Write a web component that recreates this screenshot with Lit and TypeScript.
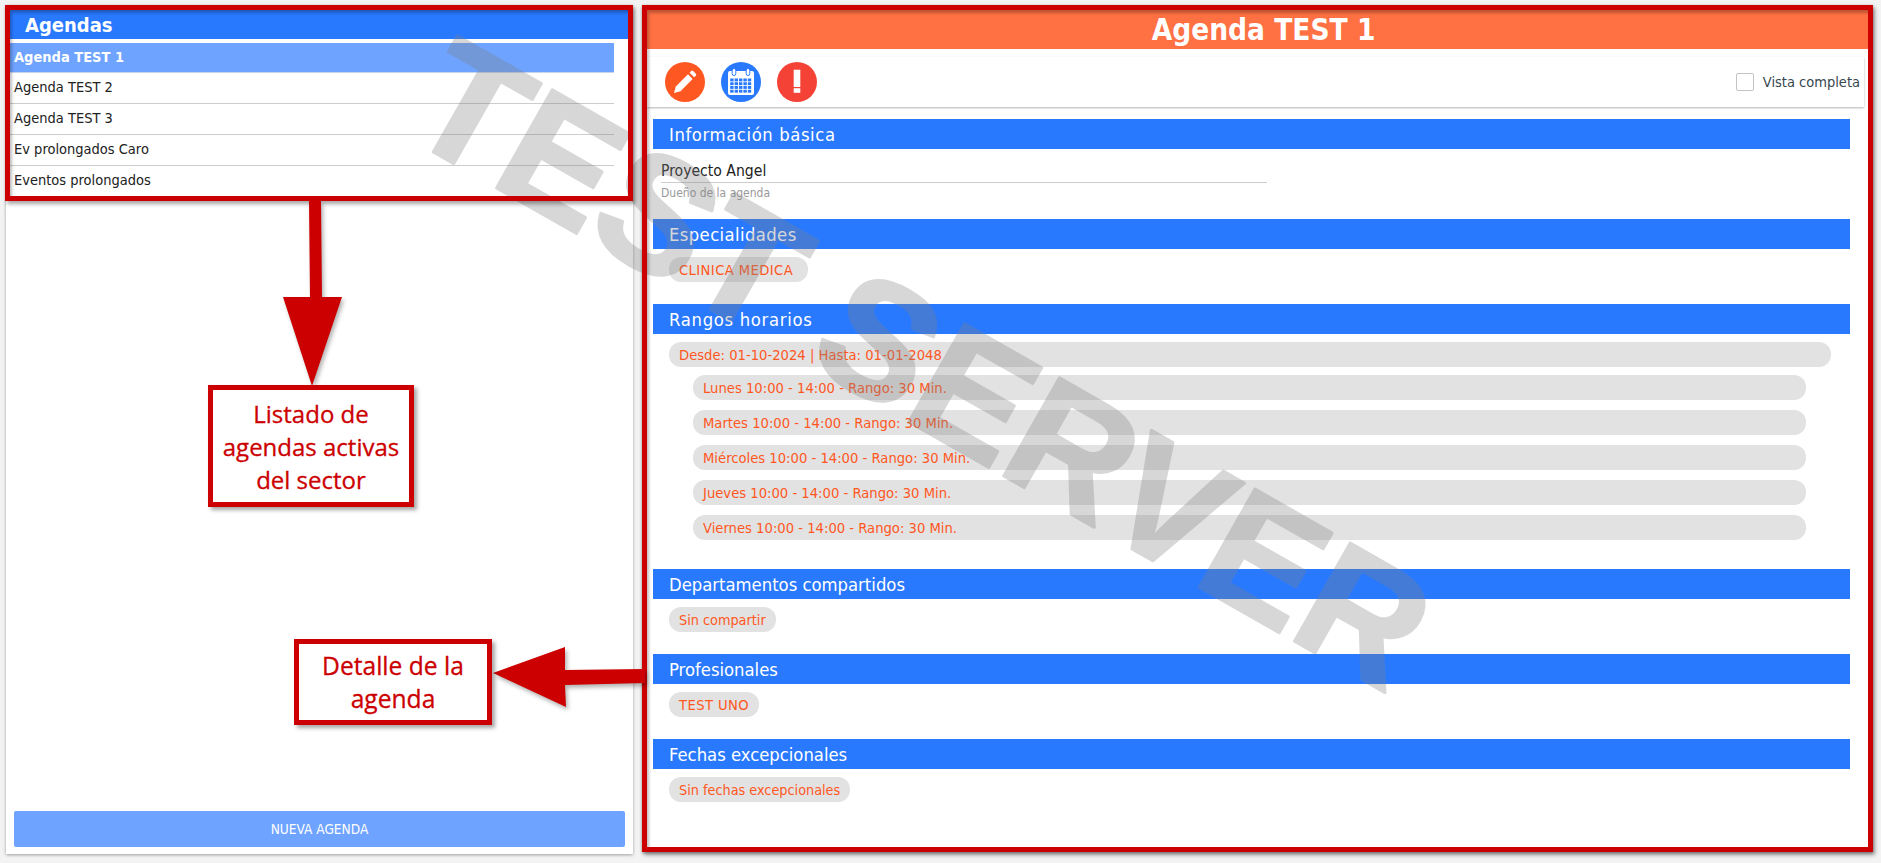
import { LitElement, html, css, svg } from "lit";
import { customElement } from "lit/decorators.js";

const ITEMS = ["Agenda TEST 1", "Agenda TEST 2", "Agenda TEST 3", "Ev prolongados Caro", "Eventos prolongados"];
const DAYS = ["Lunes", "Martes", "Miércoles", "Jueves", "Viernes"];

@customElement("app-root")
export class AppRoot extends LitElement {
  static styles = css`
    :host { display: block; width: 1881px; height: 863px; position: relative; overflow: hidden; background: #f3f3f3;
      font-family: "DejaVu Sans Condensed", "DejaVu Sans", sans-serif; font-stretch: condensed; font-size: 14.5px; color: #212121; }
    .page { display: flex; height: 863px; box-sizing: border-box; padding: 5px 8px 9px 6px; gap: 9px; }
    .left { width: 627px; flex: none; background: #fff; box-shadow: 0 1px 3px rgba(0,0,0,.35); display: flex; flex-direction: column; padding-top: 5px; box-sizing: border-box; }
    .lhead { height: 29px; background: #2979ff; color: #fff; font-weight: bold; font-size: 20px; line-height: 31px; padding-left: 19px; margin-bottom: 4px; }
    .list { width: 608px; flex: 1; }
    .item { height: 31px; box-sizing: border-box; border-bottom: 1px solid #ccc; padding-left: 8px; line-height: 28px; white-space: nowrap; }
    .item:last-child { border-bottom: none; }
    .item.sel { height: 30px; background: #6ea3ff; color: #fff; font-weight: bold; border-bottom-color: #c5d5ee; }
    .btn { margin: 0 8px 7px 8px; height: 36px; background: #6ea3ff; color: #fff; border-radius: 2px; text-align: center; line-height: 36px; font-size: 13.6px; }
    .right { flex: 1; background: #fff; height: 847px; padding-top: 5px; box-sizing: border-box; box-shadow: 0 1px 3px rgba(0,0,0,.35); }
    .title { height: 39px; background: #ff7043; color: #fff; font-weight: bold; font-size: 29.5px; line-height: 41px; text-align: center; padding-left: 12px; }
    .bar { margin: 8px 9px 12px 5px; height: 50px; display: flex; align-items: center; gap: 16px; padding-left: 18px; box-shadow: 0 1px 2px rgba(0,0,0,.3); background: #fff; }
    .ic { width: 40px; height: 40px; display: block; flex: none; }
    .check { margin-left: auto; display: flex; align-items: center; gap: 9px; padding-right: 4px; font-size: 14.5px; color: #37474f; }
    .box { width: 18px; height: 18px; box-sizing: border-box; border: 1px solid #c4c4c4; border-radius: 2px; background: #fff; }
    .sections { margin: 0 23px 0 11px; }
    .sh { height: 30px; background: #2979ff; color: #fff; font-size: 18.3px; line-height: 32px; padding-left: 16px; }
    .sh.s1 { letter-spacing: .6px; }
    .sh.s2 { letter-spacing: .4px; }
    .sh.s3 { letter-spacing: .7px; }
    .chips { padding: 8px 16px 22px 16px; display: flex; flex-direction: column; align-items: flex-start; }
    .chips.stack { padding-right: 19px; padding-bottom: 27px; }
    .chip { height: 25px; line-height: 26px; padding: 0 10px; border-radius: 12px; background: #e2e2e2; color: #ff5722; white-space: nowrap; box-sizing: border-box; font-size: 14.65px; }
    .chip.caps { letter-spacing: .4px; }
    .chip.pad { padding-right: 15px; }
    .chip.low { font-size: 14.3px; }
    .chip.wide { align-self: stretch; }
    .chip.sub { align-self: stretch; margin: 8px 25px 2px 24px; }
    .owner { padding: 10px 8px 0; height: 70px; box-sizing: border-box; width: 620px; }
    .val { width: 606px; height: 24px; line-height: 24px; border-bottom: 1px solid #ccc; font-size: 15.6px; box-sizing: border-box; }
    .lab { font-size: 12px; color: #999; margin-top: 3px; }
    .wm { position: absolute; left: 0; top: 0; pointer-events: none; }
    .wm text { font-family: "Liberation Sans", Arial, sans-serif; font-weight: bold; font-size: 164px; fill: #808080; stroke: #808080; stroke-width: 3px; stroke-linejoin: round; }
    .wm g { opacity: .31; }
    .frame { position: absolute; box-sizing: border-box; border: 5px solid #cc0000; box-shadow: 2px 3px 4px rgba(0,0,0,.35), inset 2px 3px 3px rgba(0,0,0,.25); pointer-events: none; }
    .f1 { left: 5px; top: 5px; width: 628px; height: 196px; }
    .f2 { left: 642px; top: 5px; width: 1231px; height: 847px; }
    .call { position: absolute; box-sizing: border-box; border: 5px solid #cc0000; background: #fff; color: #cc0000; box-shadow: 3px 3px 4px rgba(0,0,0,.35);
      font-family: "Open Sans", sans-serif; font-stretch: normal; font-size: 24px; -webkit-text-stroke: .3px #cc0000; line-height: 33px; text-align: center; display: flex; align-items: center; justify-content: center; }
    .c1 { left: 208px; top: 385px; width: 206px; height: 122px; }
    .c2 { left: 294px; top: 639px; width: 198px; height: 86px; font-size: 24.6px; }
    .arrows { position: absolute; left: 0; top: 0; pointer-events: none; filter: drop-shadow(2px 3px 2px rgba(0,0,0,.3)); }
  `;

  private calendar() {
    const cells = [];
    for (let r = 0; r < 4; r++)
      for (let c = 0; c < 5; c++)
        cells.push(svg`<rect x=${9.2 + c * 4.4} y=${16.5 + r * 3.75} width="3.4" height="2.9" fill="#2979ff" />`);
    return html`<svg class="ic" viewBox="0 0 40 40">
      <circle cx="20" cy="20" r="20" fill="#2979ff" />
      <rect x="7" y="9" width="26" height="24" rx="2" fill="#fff" />
      ${cells}
      <rect x="11.2" y="6.5" width="3.6" height="7" rx="1.8" fill="#fff" stroke="#2979ff" stroke-width="1" />
      <rect x="25.2" y="6.5" width="3.6" height="7" rx="1.8" fill="#fff" stroke="#2979ff" stroke-width="1" />
    </svg>`;
  }

  render() {
    return html`
      <div class="page">
        <div class="left">
          <div class="lhead">Agendas</div>
          <div class="list">
            ${ITEMS.map((t, i) => html`<div class="item ${i === 0 ? "sel" : ""}">${t}</div>`)}
          </div>
          <div class="btn">NUEVA AGENDA</div>
        </div>
        <div class="right">
          <div class="title">Agenda TEST 1</div>
          <div class="bar">
            <svg class="ic" viewBox="0 0 40 40">
              <circle cx="20" cy="20" r="20" fill="#ff5722" />
              <path d="M9 31l1.8-6.6L23 12.3l4.6 4.6L15.5 29.2z" fill="#fff" />
              <path d="M24.6 10.7l1.6-1.6a1.4 1.4 0 0 1 2 0l2.6 2.6a1.4 1.4 0 0 1 0 2l-1.6 1.6z" fill="#fff" />
            </svg>
            ${this.calendar()}
            <svg class="ic" viewBox="0 0 40 40">
              <circle cx="20" cy="20" r="20" fill="#f44336" />
              <rect x="16.7" y="7.7" width="6.6" height="17.3" fill="#fff" />
              <rect x="16.7" y="26.2" width="6.6" height="4.6" fill="#fff" />
            </svg>
            <div class="check"><span class="box"></span><span>Vista completa</span></div>
          </div>
          <div class="sections">
            <div class="sh s1">Información básica</div>
            <div class="owner">
              <div class="val">Proyecto Angel</div>
              <div class="lab">Dueño de la agenda</div>
            </div>
            <div class="sh s2">Especialidades</div>
            <div class="chips"><div class="chip caps pad">CLINICA MEDICA</div></div>
            <div class="sh s3">Rangos horarios</div>
            <div class="chips stack">
              <div class="chip wide">Desde: 01-10-2024 | Hasta: 01-01-2048</div>
              ${DAYS.map((d) => html`<div class="chip sub">${d} 10:00 - 14:00 - Rango: 30 Min.</div>`)}
            </div>
            <div class="sh">Departamentos compartidos</div>
            <div class="chips"><div class="chip low">Sin compartir</div></div>
            <div class="sh">Profesionales</div>
            <div class="chips"><div class="chip caps">TEST UNO</div></div>
            <div class="sh">Fechas excepcionales</div>
            <div class="chips"><div class="chip low">Sin fechas excepcionales</div></div>
          </div>
        </div>
      </div>

      <svg class="wm" width="1881" height="863"><g><text transform="translate(400 133) rotate(29.6)">TEST SERVER</text></g></svg>

      <div class="frame f1"></div>
      <div class="frame f2"></div>
      <svg class="arrows" width="1881" height="863" viewBox="0 0 1881 863">
        <path d="M309 201L321 201L322 297L342 297L312 386L283 297L310 297Z" fill="#cc0000" />
        <path d="M645 669L645 683L565 685L566 707L493 673L565 647L565 670Z" fill="#cc0000" />
      </svg>
      <div class="call c1"><span>Listado de<br />agendas activas<br />del sector</span></div>
      <div class="call c2"><span>Detalle de la<br />agenda</span></div>
    `;
  }
}
